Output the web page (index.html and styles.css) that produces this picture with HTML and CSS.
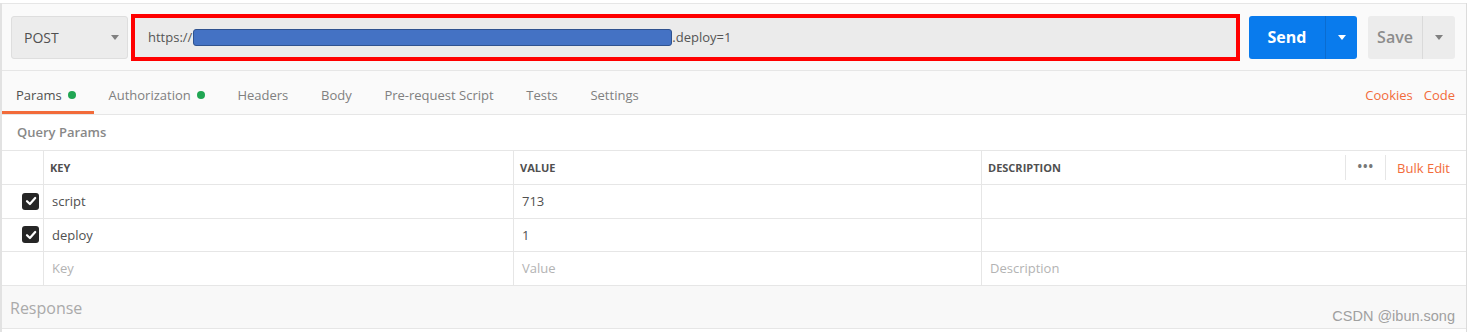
FILE: index.html
```html
<!DOCTYPE html>
<html lang="en">
<head>
    <meta charset="UTF-8">
    <meta name="viewport" content="width=device-width, initial-scale=1.0">
    <title>Request - POST</title>
    <link rel="stylesheet" href="styles.css">
</head>
<body>
    <div class="builder">
        <div class="request-bar">
            <div class="method-select">
                <span>POST</span>
                <span class="caret"></span>
            </div>
            <div class="url-box">
                <span>https://</span><span class="redacted"></span><span>.deploy=1</span>
            </div>
            <div class="btn-group send">
                <span class="btn-main">Send</span>
                <span class="btn-caret"><span class="caret"></span></span>
            </div>
            <div class="btn-group save">
                <span class="btn-main">Save</span>
                <span class="btn-caret"><span class="caret"></span></span>
            </div>
        </div>

        <div class="tabs">
            <div class="tab active">Params <span class="dot"></span></div>
            <div class="tab">Authorization <span class="dot"></span></div>
            <div class="tab">Headers</div>
            <div class="tab">Body</div>
            <div class="tab">Pre-request Script</div>
            <div class="tab">Tests</div>
            <div class="tab">Settings</div>
            <div class="tab-links">
                <span>Cookies</span>
                <span>Code</span>
            </div>
        </div>

        <div class="section-title">Query Params</div>

        <div class="params">
            <div class="row head">
                <div class="cell check"></div>
                <div class="cell">KEY</div>
                <div class="cell">VALUE</div>
                <div class="cell desc">
                    <span>DESCRIPTION</span>
                    <div class="head-actions">
                        <span class="more">&bull;&bull;&bull;</span>
                        <span class="bulk">Bulk Edit</span>
                    </div>
                </div>
            </div>
            <div class="row">
                <div class="cell check"><span class="checkbox"><svg viewBox="0 0 12 12" width="12" height="12"><path d="M2 6.2 L4.9 9 L10.2 3" fill="none" stroke="#fff" stroke-width="2.2" stroke-linecap="round" stroke-linejoin="round"/></svg></span></div>
                <div class="cell">script</div>
                <div class="cell">713</div>
                <div class="cell"></div>
            </div>
            <div class="row">
                <div class="cell check"><span class="checkbox"><svg viewBox="0 0 12 12" width="12" height="12"><path d="M2 6.2 L4.9 9 L10.2 3" fill="none" stroke="#fff" stroke-width="2.2" stroke-linecap="round" stroke-linejoin="round"/></svg></span></div>
                <div class="cell">deploy</div>
                <div class="cell">1</div>
                <div class="cell"></div>
            </div>
            <div class="row placeholder">
                <div class="cell check"></div>
                <div class="cell">Key</div>
                <div class="cell">Value</div>
                <div class="cell">Description</div>
            </div>
        </div>

        <div class="response">
            Response
            <span class="watermark">CSDN @ibun.song</span>
        </div>
    </div>
</body>
</html>
```

FILE: styles.css
```css
body {
    margin: 0;
    padding: 0;
    background-color: #fff;
    font-family: "Open Sans", "Noto Sans", sans-serif;
    color: #505050;
}

.builder {
    width: 1464px;
    height: 329px;
    border-left: 2px solid #e2e2e2;
    border-right: 1px solid #dcdcdc;
    background-color: #fff;
}

/* request bar */
.request-bar {
    display: flex;
    align-items: center;
    height: 66px;
    margin-top: 3px;
    padding-left: 9px;
    border-top: 1px solid #e6e6e6;
    border-bottom: 1px solid #e6e6e6;
    background-color: #fafafa;
}

.method-select {
    display: flex;
    align-items: center;
    justify-content: space-between;
    box-sizing: border-box;
    width: 117px;
    height: 43px;
    padding: 0 8px 0 12px;
    border: 1px solid #dedede;
    border-radius: 3px;
    background-color: #ececec;
    font-size: 14px;
    color: #505050;
}

.caret {
    width: 0;
    height: 0;
    border-left: 4px solid transparent;
    border-right: 4px solid transparent;
    border-top: 5px solid #808080;
}

.url-box {
    display: flex;
    align-items: center;
    box-sizing: border-box;
    width: 1109px;
    height: 47px;
    margin-left: 3px;
    padding-left: 13px;
    border: 4px solid #ff0000;
    background-color: #ebebeb;
    font-size: 13px;
    color: #555;
}

.redacted {
    display: inline-block;
    box-sizing: border-box;
    width: 479px;
    height: 17px;
    margin-left: 1px;
    border: 1px solid #2f528f;
    border-radius: 3px;
    background-color: #4472c4;
}

.btn-group {
    display: flex;
    height: 43px;
    border-radius: 3px;
    font-size: 16px;
    font-weight: 700;
}

.btn-main,
.btn-caret {
    display: flex;
    align-items: center;
    justify-content: center;
}

.send {
    margin-left: 9px;
    background-color: #097bed;
    color: #fff;
}

.send .btn-main {
    width: 76px;
}

.send .btn-caret {
    width: 31px;
    border-left: 1px solid #0a6cd0;
}

.send .caret {
    border-top-color: #fff;
}

.save {
    margin-left: 11px;
    background-color: #ececec;
    color: #8c8c8c;
    font-weight: 600;
}

.save .btn-main {
    width: 54px;
}

.save .btn-caret {
    width: 32px;
    border-left: 1px solid #dadada;
}

/* tabs */
.tabs {
    display: flex;
    align-items: stretch;
    height: 43px;
    border-bottom: 1px solid #e6e6e6;
    background-color: #fafafa;
    font-size: 13px;
}

.tab {
    display: flex;
    align-items: center;
    box-sizing: border-box;
    padding: 7px 17.7px 0 15px;
    border-bottom: 3px solid transparent;
    color: #808080;
}

.tab:first-child {
    padding-left: 14px;
}

.tab.active {
    color: #505050;
    border-bottom-color: #f26b3a;
}

.dot {
    display: inline-block;
    width: 8px;
    height: 8px;
    margin-left: 6px;
    border-radius: 50%;
    background-color: #20a653;
}

.tab-links {
    display: flex;
    align-items: center;
    gap: 11px;
    margin-left: auto;
    padding-right: 11px;
    padding-top: 4px;
    color: #f26b3a;
}

.section-title {
    height: 35px;
    line-height: 35px;
    padding-left: 15px;
    font-size: 13px;
    font-weight: 600;
    color: #888;
}

/* params table */
.params {
    font-size: 13px;
}

.row {
    display: grid;
    grid-template-columns: 41px 470px 468px 1fr;
    height: 32.6px;
    border-top: 1px solid #e6e6e6;
}

.cell {
    display: flex;
    align-items: center;
    padding: 0 8px;
    border-left: 1px solid #e6e6e6;
    color: #505050;
}

.cell.check {
    justify-content: flex-end;
    padding: 0 4px 0 0;
    border-left: none;
}

.head {
    height: 33px;
    font-size: 11px;
    font-weight: 700;
}

.head .cell {
    padding-left: 6px;
}

.cell.desc {
    justify-content: space-between;
    padding-right: 16px;
}

.head-actions {
    display: flex;
    align-items: center;
    height: 23px;
}

.more {
    display: flex;
    align-items: center;
    height: 100%;
    padding: 0 11px 2px 12px;
    border-left: 1px solid #e6e6e6;
    border-right: 1px solid #e6e6e6;
    color: #777;
    font-size: 12px;
    letter-spacing: 1px;
}

.bulk {
    padding-left: 11px;
    color: #f26b3a;
    font-weight: 400;
    font-size: 13px;
}

.checkbox {
    display: flex;
    align-items: center;
    justify-content: center;
    width: 17px;
    height: 17px;
    border-radius: 3px;
    background-color: #262626;
}

.placeholder .cell {
    color: #b3b3b3;
}

/* response */
.response {
    position: relative;
    height: 42px;
    line-height: 44px;
    padding-left: 8px;
    border-top: 1px solid #e6e6e6;
    border-bottom: 1px solid #e6e6e6;
    background-color: #f8f8f8;
    font-size: 16px;
    color: #aaa;
}

.watermark {
    position: absolute;
    right: 11px;
    top: 9px;
    line-height: 42px;
    font-family: "Liberation Sans", Arial, sans-serif;
    font-size: 14.5px;
    color: #a0a0a0;
}
```
